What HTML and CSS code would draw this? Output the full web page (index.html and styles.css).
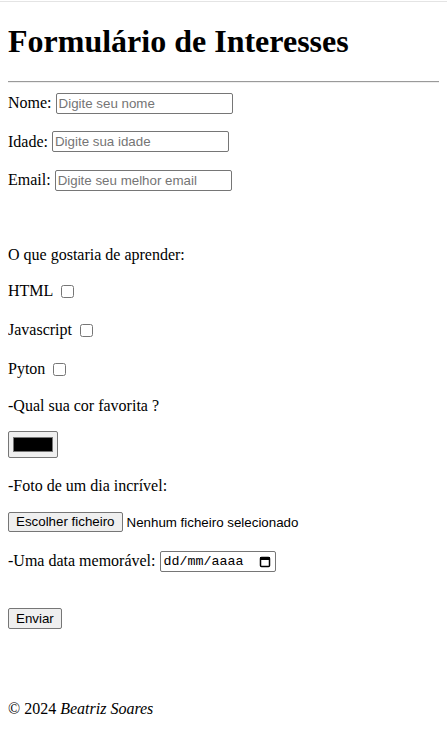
FILE: index.html
```html
<!DOCTYPE html>
<html lang="pt">
<head>
<meta charset="utf-8">
<title>Formulário de Interesses</title>
<link rel="stylesheet" href="styles.css">
</head>
<body>
<header class="page-header">
  <h1 class="title">Formulário de Interesses</h1>
  <div class="rule" role="separator"></div>
</header>
<main>
  <form class="form">
    <p class="row row-input row-first"><label class="field">Nome: <input class="text-input" type="text" placeholder="Digite seu nome"></label></p>
    <p class="row row-input"><label class="field">Idade: <input class="text-input" type="text" placeholder="Digite sua idade"></label></p>
    <p class="row row-input"><label class="field">Email: <input class="text-input" type="text" placeholder="Digite seu melhor email"></label></p>

    <p class="row row-gap">O que gostaria de aprender:</p>
    <p class="row row-check"><label class="field">HTML <input class="check" type="checkbox"></label></p>
    <p class="row row-check"><label class="field">Javascript <input class="check" type="checkbox"></label></p>
    <p class="row row-check"><label class="field">Pyton <input class="check" type="checkbox"></label></p>

    <p class="row">-Qual sua cor favorita ?</p>
    <p class="row row-color"><span class="color-btn"><span class="color-swatch"></span></span></p>

    <p class="row">-Foto de um dia incrível:</p>
    <p class="row row-file"><span class="btn btn-file">Escolher ficheiro</span><span class="file-status">Nenhum ficheiro selecionado</span></p>

    <p class="row row-date"><span>-Uma data memorável:</span><span class="date-input"><span class="date-text">dd/mm/aaaa</span><svg class="cal-icon" width="12" height="13" viewBox="0 0 12 13"><rect x="1.5" y="2.5" width="9" height="9" rx="1" fill="none" stroke="#000" stroke-width="1.5"/><rect x="1" y="2" width="10" height="3" fill="#000"/></svg></span></p>

    <p class="row row-submit"><span class="btn">Enviar</span></p>
  </form>
</main>
<footer class="footer">
  <p class="copy">© 2024 <em>Beatriz Soares</em></p>
</footer>
</body>
</html>
```
FILE: styles.css
```css
html {
  background: linear-gradient(#ffffff 0, #ffffff 1px, #e4e4e4 1px, #e4e4e4 2px, #ffffff 2px) no-repeat;
  background-color: #fff;
}
body {
  margin: 8px;
  font-family: "Liberation Serif", "Times New Roman", serif;
  font-size: 16px;
  color: #000;
}
.title {
  font-size: 32px;
  font-weight: bold;
  margin: 15px 0 21px;
}
.rule {
  box-sizing: border-box;
  margin: 0 -16px 0 0;
  border-top: 1px solid #9a9a9a;
  border-bottom: 1px solid #eeeeee;
  height: 2px;
}
.form { margin: 0; }
.row { margin: 16px 0; }
.row-input,
.row-check,
.row-file,
.row-date,
.row-submit {
  display: flex;
  align-items: center;
}
.row-input { height: 22.5px; }
.row-check { height: 23px; }
.row-file { height: 23px; gap: 4px; }
.row-date { height: 23px; gap: 4px; }
.row-submit { height: 23px; margin-top: 34px; }
.row-first { margin-top: 9px; }
.row-gap { margin-top: 54px; }
.row-color { height: 30px; margin-bottom: 16px; }
.field {
  display: flex;
  align-items: center;
  gap: 4px;
}
.text-input {
  font-family: "Liberation Sans", Arial, sans-serif;
  font-size: 13.333px;
  width: 177px;
  height: 21px;
  margin: 0;
  box-sizing: border-box;
  padding: 1px 2px;
  border: 1px solid #767676;
  border-radius: 2px;
}
.text-input::placeholder { color: #757575; }
.check {
  width: 13px;
  height: 13px;
  margin: 0 3px 0 4px;
}
.color-btn {
  display: block;
  box-sizing: border-box;
  width: 50px;
  height: 27px;
  background: #efefef;
  border: 1px solid #767676;
  border-radius: 2px;
  padding: 5px 4px;
}
.color-swatch {
  display: block;
  height: 100%;
  background: #000;
  border: 1px solid #777;
  box-sizing: border-box;
}
.btn {
  display: inline-block;
  font-family: "Liberation Sans", Arial, sans-serif;
  font-size: 13.333px;
  line-height: 15px;
  padding: 2px 7px;
  background: #efefef;
  border: 1px solid #767676;
  border-radius: 2px;
}
.btn-file { line-height: 16px; padding: 1px 7px; }
.file-status {
  font-family: "Liberation Sans", Arial, sans-serif;
  font-size: 13.333px;
}
.date-input {
  display: flex;
  align-items: center;
  justify-content: space-between;
  box-sizing: border-box;
  width: 116px;
  height: 21px;
  padding: 0 4px 0 3px;
  border: 1px solid #767676;
  border-radius: 2px;
}
.date-text {
  font-family: "Liberation Mono", "DejaVu Sans Mono", monospace;
  font-size: 13.333px;
}
.cal-icon { display: block; }
.footer { margin-top: 70px; }
.copy { margin: 0; }
```
